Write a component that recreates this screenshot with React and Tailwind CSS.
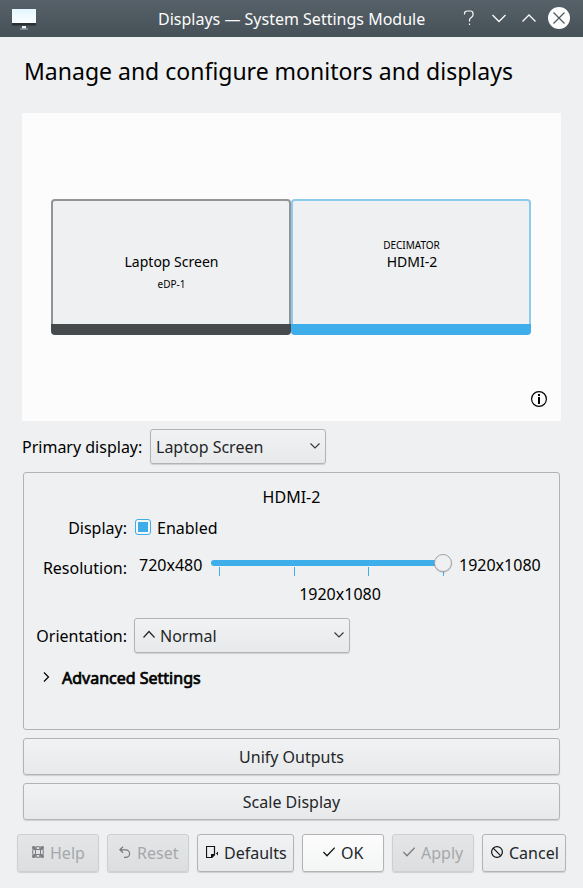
import React, { useState } from 'react';
import clsx from 'clsx';

// Small line icons, drawn with the current text colour
const Icon = ({ className, children, size = 16, box = 16 }) => (
    <svg className={clsx('shrink-0', className)} width={size} height={size} viewBox={`0 0 ${box} ${box}`} fill="none" stroke="currentColor" strokeWidth="1">
        {children}
    </svg>
);

const HelpIcon = () => (
    <Icon size={12} box={12}>
        <circle cx="6" cy="6" r="5.4" />
        <rect x="3.5" y="3.5" width="5" height="5" rx="1" />
        <path d="M.5 3.5v-3h3M8.5.5h3v3M11.5 8.5v3h-3M3.5 11.5h-3v-3" strokeOpacity=".7" />
        <path d="M1 1l3 3M11 1 8 4M11 11 8 8M1 11l3-3" strokeWidth="2" />
        <path d="M4.5 1v3M7.5 1v3M4.5 8v3M7.5 8v3" strokeWidth=".6" />
    </Icon>
);

const ResetIcon = () => (
    <Icon size={12} box={12}>
        <path d="M4 .8.9 3.800 4 6.800M1 3.800h5.800a3.800 3.800 0 0 1 0 7.600H5" strokeWidth="1.2" />
    </Icon>
);

const DefaultsIcon = () => (
    <Icon size={12} box={12}>
        <path d="M.5.5h8v8l-3 3h-5z" strokeWidth="1.2" />
        <path d="M5 12V8h4v1L6 12z" fill="currentColor" stroke="none" />
        <path d="m12 5.500-2 2 2 2z" fill="currentColor" stroke="none" />
    </Icon>
);

const CheckIcon = () => (
    <Icon size={12} box={12}>
        <path d="m.4 6 3.600 3.700L11.700 1.700" strokeWidth="1.3" />
    </Icon>
);

const CancelIcon = () => (
    <Icon size={12} box={12}>
        <circle cx="6" cy="6" r="5.400" strokeWidth="1.200" />
        <path d="m2.200 2.200 7.600 7.600" strokeWidth="1.200" />
    </Icon>
);

const MonitorIcon = () => (
    <svg width="24" height="22" viewBox="0 0 24 22">
        <defs>
            <linearGradient id="screen" x1="0" y1="0" x2="0" y2="1">
                <stop offset="0" stopColor="#e3f6ff" />
                <stop offset="1" stopColor="#fbfeff" />
            </linearGradient>
        </defs>
        <path d="M0 1h24v14H0z" fill="url(#screen)" />
        <path d="M0 15h24v2.500H0z" fill="#2b3034" />
        <path d="M10 18h4v2.500h-4z" fill="#e6f2f6" />
        <path d="M8 20.500h8v1H8z" fill="#a9b0b4" />
    </svg>
);

const TitleBar = () => (
    <header className="flex h-[37px] items-center bg-linear-to-b from-[#566169] to-[#465057] pl-3 pr-3 text-[#fcfcfc]">
        <div className="h-[22px] w-[146px]"><MonitorIcon /></div>
        <h1 className="w-[296px] whitespace-nowrap text-[16px]">Displays — System Settings Module</h1>
        <div className="mb-[2px] flex flex-1 items-center">
            <Icon className="ml-2" size={16}>
                <path d="M2.500 4.500v-1a2.500 2.500 0 0 1 2.500-2.500h3.500a2.500 2.500 0 0 1 2.500 2.500v1.500c0 2.500-3.500 2.500-3.500 5v1.500M7.500 13.500v1.500" strokeWidth="1.200" />
            </Icon>
            <Icon className="ml-[13px]" size={16}><path d="m1.500 5 6.500 6.500L14.500 5" strokeWidth="1.300" /></Icon>
            <Icon className="ml-[14px]" size={16}><path d="m1.500 11.500 6.500-6.500 6.500 6.500" strokeWidth="1.300" /></Icon>
            <Icon className="ml-[11px]" size={22} box={22}>
                <circle cx="11" cy="11" r="11" fill="#fcfcfc" stroke="none" />
                <path d="m5.500 5.500 11 11m0-11-11 11" stroke="#4d575f" strokeWidth="1.200" />
            </Icon>
        </div>
    </header>
);

const Screen = ({ active, children }) => (
    <div className={clsx('flex h-[136px] w-[240px] flex-col rounded-[4px] bg-[#eff0f1]', active ? 'text-[#3daee9]' : 'text-[#464a4d]')}>
        <div className="flex flex-1 flex-col items-center rounded-t-[4px] border-2 border-b-0 border-current/55">
            <div className="flex flex-col items-center pl-px text-black">{children}</div>
        </div>
        <div className="h-[11px] rounded-b-[4px] bg-current" />
    </div>
);

const Chevron = ({ className }) => (
    <svg className={className} width="10" height="6" viewBox="0 0 10 6" fill="none" stroke="#31363b" strokeWidth="1.1">
        <path d="m.5.5 4.500 4.500L9.500.5" />
    </svg>
);

const Select = ({ className, icon, children }) => (
    <button className={clsx('flex h-[35px] items-center rounded-[3px] border border-[#b1b3b5] bg-linear-to-b from-[#f1f2f3] to-[#e8e9ea] text-[#232629] shadow-[0_1px_1px_#0002]', className)}>
        {icon}
        <span>{children}</span>
        <Chevron className="mb-0.5 ml-auto mr-[5px]" />
    </button>
);

const WideButton = ({ children }) => (
    <button className="h-[37px] w-full rounded-[3px] border border-[#b1b3b5] bg-linear-to-b from-[#f1f2f3] to-[#e8e9ea] text-[#232629] shadow-[0_1px_1px_#0002]">
        {children}
    </button>
);

const DialogButton = ({ className, icon, disabled, primary, children }) => (
    <button
        disabled={disabled}
        className={clsx(
            'flex h-[38px] items-center rounded-[3px] border bg-linear-to-b shadow-[0_1px_1px_#0002]',
            disabled && 'border-[#cdcfd0] from-[#e4e5e6] to-[#dddedf] text-[#a5a8aa]',
            primary && 'border-[#b1b3b5] from-[#fcfcfc] to-[#f4f5f5] text-[#232629]',
            !disabled && !primary && 'border-[#b1b3b5] from-[#f1f2f3] to-[#e8e9ea] text-[#232629]',
            className
        )}
    >
        <span className={clsx('mb-[2px]', disabled ? 'text-[#76797c]' : 'text-[#111315]')}>{icon}</span>
        <span className="ml-[6px]">{children}</span>
    </button>
);

const ticks = [0, 1, 2, 3];

const ResolutionSlider = () => (
    <div className="relative h-[24px] w-[241px]">
        <div className="mt-[7px] h-[6px] w-[232px] rounded-l-full bg-[#3daee9]" />
        <div className="ml-[8px] mt-px flex w-[225px] justify-between">
            {ticks.map((t) => <div key={t} className="h-[9px] w-px bg-[#3daee9]" />)}
        </div>
        <div className="absolute right-0 top-px size-[18px] rounded-full border border-[#9fa2a4] bg-[#eff0f1] shadow-[0_1px_1px_#0002]" />
    </div>
);

const App = () => {
    const [enabled, setEnabled] = useState(true);

    return (
        <div className="flex h-[888px] w-[583px] flex-col bg-[#eff0f1] font-['Noto_Sans',sans-serif] text-[16px] leading-[24px] text-black">
            <TitleBar />

            <h2 className="ml-6 mt-[16px] h-[60px] whitespace-nowrap text-[23px] leading-[36px]">Manage and configure monitors and displays</h2>

            {/* Screen arrangement */}
            <section className="ml-[22px] flex h-[308px] w-[539px] flex-col bg-[#fcfcfc] pt-[86px]">
                <div className="ml-[29px] flex">
                    <Screen>
                        <div className="mt-[50px] text-[14px] leading-[22px]">Laptop Screen</div>
                        <div className="mt-[3px] text-[10px] leading-[16px]">eDP-1</div>
                    </Screen>
                    <Screen active>
                        <div className="mt-[36px] text-[10px] leading-[16px]">DECIMATOR</div>
                        <div className="-mt-[2px] pl-px text-[14px] leading-[22px]">HDMI-2</div>
                    </Screen>
                </div>
                <Icon className="mb-[14px] ml-auto mr-[14px] mt-auto" size={16}>
                    <circle cx="8" cy="8" r="7.400" strokeWidth="1.200" />
                    <path d="M8 3v2M8 6v7" strokeWidth="2" />
                </Icon>
            </section>

            <div className="ml-[22px] mt-2 flex items-center">
                <label className="w-[128px]">Primary display:</label>
                <Select className="w-[176px] pl-[5px]">Laptop Screen</Select>
            </div>

            {/* Settings of the selected output */}
            <section className="ml-[23px] mt-2 flex h-[258px] w-[537px] flex-col rounded-[3px] border border-[#b1b3b5]">
                <div className="mt-[12px] text-center">HDMI-2</div>
                <div className="mt-[7px] flex items-center">
                    <label className="w-[103px] text-right">Display:</label>
                    <button
                        onClick={() => setEnabled(!enabled)}
                        className="mb-[2px] ml-[8px] flex size-[16px] items-center justify-center rounded-[3px] border border-[#3daee9] bg-[#f6f7f8]"
                    >
                        {enabled && <span className="size-[10px] bg-[#3daee9]" />}
                    </button>
                    <span className="ml-[6px]">Enabled</span>
                </div>
                <div className="mt-[13px] flex">
                    <label className="mt-[3px] w-[103px] text-right">Resolution:</label>
                    <span className="ml-[12px] w-[72px]">720x480</span>
                    <ResolutionSlider />
                    <span className="ml-[7px]">1920x1080</span>
                </div>
                <div className="ml-[116px] mt-[2px] w-[400px] text-center">1920x1080</div>
                <div className="mt-[12px] flex items-center">
                    <label className="w-[103px] text-right">Orientation:</label>
                    <Select
                        className="ml-[7px] w-[216px] pl-[8px]"
                        icon={<Icon className="mb-[3px] mr-[5px]" size={12} box={12}><path d="m.5 9.500 5.500-6 5.500 6" strokeWidth="1.200" /></Icon>}
                    >
                        Normal
                    </Select>
                </div>
                <div className="mt-[13px] flex items-center">
                    <Icon className="mb-[2px] ml-[16px]" size={12} box={12}><path d="m4 1.500 4.500 4.500L4 10.500" strokeWidth="1.200" /></Icon>
                    <span className="ml-[10px] [-webkit-text-stroke:0.7px_black]">Advanced Settings</span>
                </div>
            </section>

            <div className="ml-[23px] mt-2 flex w-[537px] flex-col gap-2">
                <WideButton>Unify Outputs</WideButton>
                <WideButton>Scale Display</WideButton>
            </div>

            <footer className="ml-[17px] mt-[14px] flex gap-2">
                <DialogButton className="w-[82px] pl-[14px]" icon={<HelpIcon />} disabled>Help</DialogButton>
                <DialogButton className="w-[82px] pl-[11px]" icon={<ResetIcon />} disabled>Reset</DialogButton>
                <DialogButton className="w-[97px] pl-[8px]" icon={<DefaultsIcon />}>Defaults</DialogButton>
                <DialogButton className="w-[82px] pl-[20px]" icon={<CheckIcon />} primary>OK</DialogButton>
                <DialogButton className="w-[82px] pl-[10px]" icon={<CheckIcon />} disabled>Apply</DialogButton>
                <DialogButton className="w-[84px] pl-[8px]" icon={<CancelIcon />}>Cancel</DialogButton>
            </footer>
        </div>
    );
};

export default App;
